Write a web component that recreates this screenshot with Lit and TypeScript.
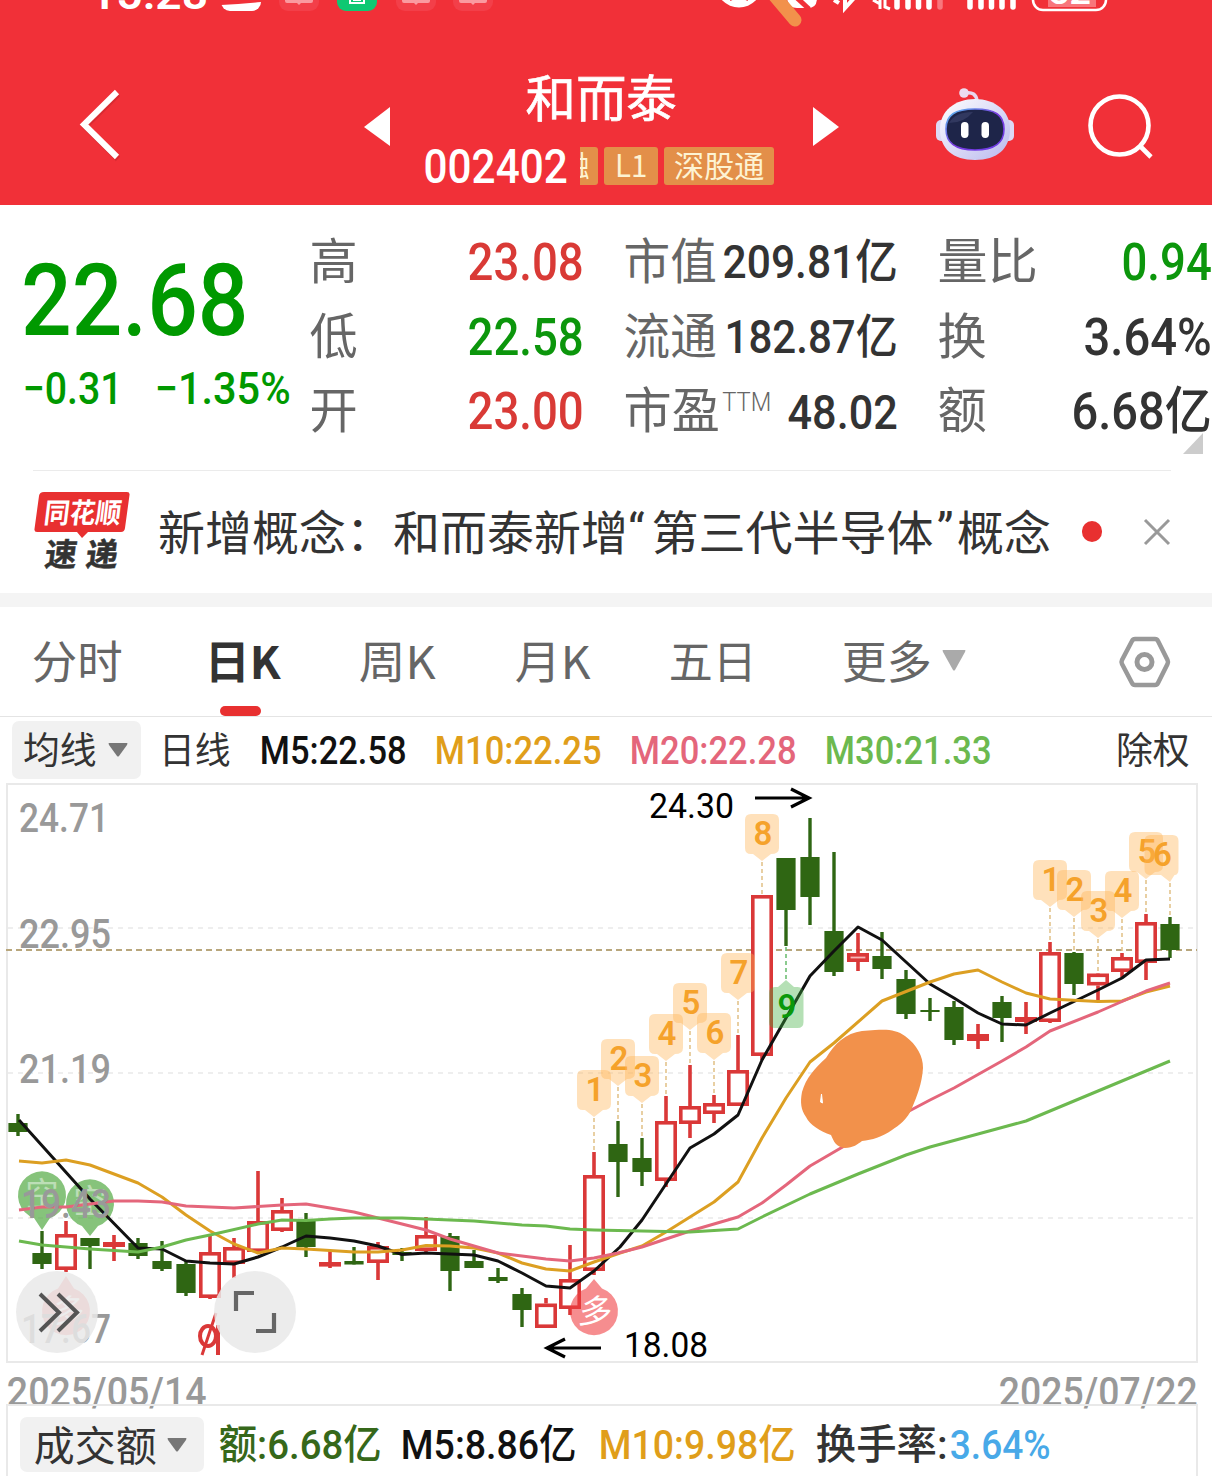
import { LitElement, html, svg, css } from "lit";
import { customElement } from "lit/decorators.js";

const CAP = 0.711;

/** Text fitted to an exact ink width; the box is as tall as a capital, so rows align on the baseline. */
const fit = (text: string, width: number, size: number, cls = "") => {
  const cap = Math.round(size * CAP);
  return html`<svg class="fit ${cls}" width=${width} height=${cap}>
    <text x=${-size * 0.03} y=${cap} font-size=${size} textLength=${width + size * 0.045} lengthAdjust="spacingAndGlyphs">${text}</text>
  </svg>`;
};

type Candle = [high: number, top: number, bottom: number, low: number, up: 0 | 1];

const CANDLES: Candle[] = [
  [1114, 1123, 1132, 1136, 0], [1231, 1253, 1264, 1269, 0], [1221, 1234, 1270, 1272, 1],
  [1238, 1238, 1246, 1269, 0], [1235, 1242, 1247, 1261, 1], [1238, 1243, 1256, 1259, 0],
  [1241, 1261, 1269, 1271, 0], [1260, 1264, 1293, 1296, 0], [1235, 1252, 1298, 1299, 1],
  [1238, 1247, 1264, 1278, 1], [1171, 1221, 1252, 1253, 1], [1198, 1210, 1231, 1232, 1],
  [1213, 1220, 1247, 1257, 0], [1250, 1262, 1266, 1268, 1], [1247, 1261, 1264.5, 1264.5, 0],
  [1242, 1246, 1263, 1280, 1], [1248, 1252, 1255, 1261, 0], [1217, 1235, 1251, 1253, 1],
  [1233, 1236, 1271, 1291, 0], [1250, 1261, 1268, 1268, 0], [1268, 1277, 1281, 1283, 0],
  [1288, 1294, 1310, 1327, 0], [1298, 1303.5, 1328, 1328, 1], [1245, 1279, 1309, 1315, 1],
  [1152, 1175, 1271, 1275, 1], [1121, 1144, 1162, 1197, 0], [1138, 1158, 1172, 1186, 0],
  [1096, 1121, 1181, 1187, 1], [1065, 1106, 1124, 1138, 1], [1095, 1103, 1114, 1123, 1],
  [1035, 1070, 1106, 1106, 1], [895, 895, 1056, 1060, 1], [858, 858, 910, 946, 0],
  [818, 857, 897, 925, 0], [852, 931, 972, 976, 0], [933, 953, 962, 971, 1],
  [932, 956, 969, 979, 0], [970, 979, 1014, 1019, 0], [998, 1010, 1012, 1021, 0],
  [1001, 1007, 1040, 1045, 0], [1024, 1034, 1041, 1049, 1], [996, 1002, 1018, 1042, 0],
  [1002, 1017, 1022, 1034, 1], [942, 952, 1022, 1023, 1], [952, 953, 984, 995, 0],
  [973, 973.5, 985.5, 1000, 1], [953, 957, 972, 977, 1], [914, 922, 963, 980, 1],
  [917, 924, 950, 958, 0],
];

const MA5 = "19,1120 90,1199 138,1248 162,1249 186,1261 210,1263 234,1264 258,1257 282,1247 306,1236 330,1238 354,1241 378,1246 402,1254.5 426,1253 474,1255 498,1261 522,1273 546,1286 570,1288 594,1271 620,1247 642,1220 666,1184 690,1148 714,1134 738,1115 762,1060 786,1018 810,976 834,951 858,927 882,940 906,962 930,984 954,998 978,1013 1002,1024 1026,1025 1050,1013 1098,990 1122,978 1146,960 1170,959";
const MA10 = "19,1161 42,1163 66,1160 90,1165 138,1183 162,1197 186,1215 210,1231 234,1244 258,1253 282,1248 306,1249 354,1252 378,1252 402,1250 426,1245.5 450,1246 474,1248 498,1253 522,1263 546,1269 570,1271 594,1262 620,1253 642,1246 666,1232 714,1202 738,1182 762,1138 786,1098 810,1062 834,1043 882,1001 930,982 954,974 978,970 1002,982 1026,993 1050,999 1098,1001.5 1122,1001 1146,992 1170,986";
const MA20 = "19,1210 42,1207 66,1207 90,1204 114,1201 138,1201 162,1202 186,1206 234,1208 282,1205 306,1204 354,1212 402,1224 426,1230 450,1239 474,1246 498,1253 522,1256 546,1259 570,1261 594,1258 618,1253 642,1247 666,1239 690,1231 738,1217 762,1203 786,1185 810,1166 858,1138 930,1100 954,1088 1002,1061 1026,1047 1050,1031 1098,1012 1146,991 1170,983";
const MA30 = "19,1241 42,1245 66,1247 90,1249 138,1252 162,1247 186,1240 210,1235 258,1224 282,1220 306,1220.5 330,1219 354,1218 402,1218 450,1220 474,1221 522,1225 546,1226 570,1229 594,1230 642,1231 690,1232 738,1229 762,1217 810,1194 858,1174 906,1155 930,1147 978,1134 1026,1121 1098,1091 1146,1071 1170,1061";

/** Count markers: digit, pointer x, top of the tag. */
const TAGS: [string, number, number][] = [
  ["1", 594, 1070], ["2", 618, 1039], ["3", 642, 1056], ["4", 666, 1014], ["5", 690, 983],
  ["6", 714, 1013], ["7", 738, 953], ["8", 762, 814], ["1", 1050, 860], ["2", 1074, 870],
  ["3", 1098, 891], ["4", 1122, 871], ["5", 1146, 832], ["6", 1170, 835],
];

const QUOTES: [string, number, string, number, number, string][][] = [
  [["高", 46, "23.08", 114, 51, "up"], ["低", 46, "22.58", 114, 51, "down"], ["开", 46, "23.00", 114, 51, "up"]],
  [["市值", 91, "209.81亿", 173, 47, "mid"], ["流通", 91, "182.87亿", 171, 47, "mid"], ["市盈", 94, "48.02", 108, 49, ""]],
  [["量比", 98, "0.94", 88, 51, "down"], ["换", 47, "3.64%", 126, 51, ""], ["额", 47, "6.68亿", 138, 51, ""]],
];

@customElement("stock-chart")
export class StockChart extends LitElement {
  static styles = css`
    :host { display: block; }
    svg { display: block; font-family: Roboto, "Noto Sans CJK SC", sans-serif; }
    .axis { fill: #999; font-size: 40px; font-weight: 500; }
    .mark { fill: #000; font-size: 35px; }
    .tag { fill: #f5a22b; font-size: 33px; font-weight: 600; text-anchor: middle; }
    .nine { fill: #0a980a; }
    .pin { fill: #fff; font-size: 33px; text-anchor: middle; font-family: "Noto Sans CJK SC", sans-serif; }
    .ma { fill: none; stroke-width: 3; stroke-linejoin: round; }
  `;

  private candle([h, t, b, l, up]: Candle, i: number) {
    const x = 18 + i * 24;
    return up
      ? svg`<path d="M${x} ${h}V${t}M${x} ${b}V${l}" stroke="#da3838" stroke-width="3.6"/>
        <rect x=${x - 9.2} y=${t + 1.8} width="18.4" height=${Math.max(b - t - 3.6, 1)} fill=${b - t < 10 ? "#f7b5b5" : "#fff"} stroke="#da3838" stroke-width="3.6"/>`
      : svg`<path d="M${x} ${h}V${l}" stroke="#2f6613" stroke-width="3.4"/>
        <rect x=${x - 9.6} y=${t} width="19.2" height=${b - t} fill="#2f6613"/>`;
  }

  private tag([n, x, y]: [string, number, number]) {
    const left = Math.min(x - 17, 1144.5);
    const high = CANDLES[(x - 18) / 24][0];
    const right = left + 34;
    const shoulder = Math.min(x + 9, right - 4);
    return svg`<path d="M${left + 6} ${y}H${right - 6}Q${right} ${y} ${right} ${y + 6}V${y + 34}Q${right} ${y + 40} ${shoulder} ${y + 40}L${x} ${y + 47}L${x - 9} ${y + 40}H${left + 6}Q${left} ${y + 40} ${left} ${y + 34}V${y + 6}Q${left} ${y} ${left + 6} ${y}Z" fill="#ffb454" fill-opacity=".4"/>
      <path d="M${x} ${y + 48}V${high}" stroke="#e3c48c" stroke-width="1.6" stroke-dasharray="4 3"/>
      <text class="tag" x=${left + 18} y=${y + 31}>${n}</text>`;
  }

  render() {
    return html`<svg width="1212" height="594" viewBox="0 782 1212 594">
      <g stroke="#e9e9e9" stroke-width="2" fill="none">
        <path d="M7 784H1197V1362H7Z"/>
        <path d="M8 928H1197M8 1073H1197M8 1218H1197" stroke-width="1.6" stroke-dasharray="5 5"/>
      </g>
      <path d="M6 950H1197" stroke="#b8a67c" stroke-width="2" stroke-dasharray="6 4"/>
      <g fill="#4ca63c" fill-opacity=".68">
        <path d="M42 1230L34 1218A24 24 0 1 1 50 1218Z"/>
        <path d="M90 1236L82 1226A24 24 0 1 1 98 1226Z"/>
      </g>
      <g opacity=".45"><text class="pin" x="42" y="1206">空</text><text class="pin" x="90" y="1213">空</text></g>
      ${CANDLES.map((c, i) => this.candle(c, i))}
      <g fill="#f03a3e" fill-opacity=".58">
        <path d="M594 1279L602 1288.5A24 24 0 1 1 586 1288.5Z"/>
        <path d="M66 1276L74 1288.5A24 24 0 1 1 58 1288.5Z"/>
      </g>
      <g transform="skewX(-10)"><text class="pin" x="827" y="1323">多</text><text class="pin" x="299" y="1323">多</text></g>
      <polyline class="ma" points=${MA5} stroke="#111"/>
      <polyline class="ma" points=${MA10} stroke="#dc9f22"/>
      <polyline class="ma" points=${MA20} stroke="#e4667b"/>
      <polyline class="ma" points=${MA30} stroke="#6cb94f"/>
      ${TAGS.map((t) => this.tag(t))}
      <path d="M786 947V981" stroke="#6fbf73" stroke-width="1.6" stroke-dasharray="4 3"/>
      <path d="M786 980L794 987H797.5q6 0 6 6v29q0 6-6 6H775q-6 0-6-6v-29q0-6 6-6H778Z" fill="#3cae3c" fill-opacity=".38"/>
      <text class="tag nine" x="787" y="1018">9</text>
      <path d="M875 1030C888 1029 897 1030 905 1036C917 1045 923 1056 923 1068C922 1084 917 1096 912 1108C908 1119 898 1126 892 1130C882 1137 872 1140 862 1141C858 1144 853 1148 845 1148C836 1147 834 1142 831 1135C820 1131 810 1125 806 1117C801 1110 800 1102 802 1092C806 1078 814 1069 826 1058C834 1044 846 1033 862 1031Z" fill="#f2914b"/>
      <path d="M821.5 1094L822.5 1103L820.5 1102Z" fill="#fff" stroke="#fff"/>
      <text class="axis" x="19" y="832" textLength="90" lengthAdjust="spacingAndGlyphs">24.71</text>
      <text class="axis" x="19" y="948" textLength="92" lengthAdjust="spacingAndGlyphs">22.95</text>
      <text class="axis" x="19" y="1083" textLength="92" lengthAdjust="spacingAndGlyphs">21.19</text>
      <text class="axis" x="21" y="1218" textLength="90" lengthAdjust="spacingAndGlyphs">19.43</text>
      <text class="axis" x="21" y="1343" textLength="90" lengthAdjust="spacingAndGlyphs">17.67</text>
      <text class="mark" x="649" y="818" textLength="85" lengthAdjust="spacingAndGlyphs">24.30</text>
      <text class="mark" x="624" y="1357" textLength="84" lengthAdjust="spacingAndGlyphs">18.08</text>
      <path d="M755 798H809M791 789L809 798L791 807M601 1348H547M565 1339L547 1348L565 1357" fill="none" stroke="#000" stroke-width="3.2"/>
      <g fill="none" stroke="#da3838" stroke-width="4">
        <ellipse cx="208" cy="1336" rx="8" ry="10"/><path d="M216 1313L202 1355" stroke-width="3"/><path d="M218 1325V1355"/>
      </g>
      <g fill="#e9e9e9" fill-opacity=".85"><circle cx="57" cy="1312" r="41"/><circle cx="255" cy="1312" r="41"/></g>
      <path d="M40 1294L59 1312.5L40 1331M58 1294L77 1312.5L58 1331" fill="none" stroke="#555" stroke-width="4"/>
      <path d="M236 1311V1293H254M274 1313V1331H256" fill="none" stroke="#666" stroke-width="4.2"/>
    </svg>`;
  }
}

@customElement("app-root")
export class AppRoot extends LitElement {
  static styles = css`
    :host { display: block; width: 1212px; height: 1476px; overflow: hidden; background: #fff; color: #333; font-family: Roboto, "Noto Sans CJK SC", sans-serif; }
    svg { display: block; flex: none; }
    .fit { overflow: visible; fill: currentColor; font-weight: 500; }
    .cjk { font-family: "Noto Sans CJK SC", sans-serif; font-weight: 400; }
    .thin { font-weight: 300; margin-left: 4px; }
    .mid { margin-bottom: 2px; }
    .heavy { stroke: currentColor; stroke-width: 0.7; }
    .bold { font-family: "Noto Sans CJK SC", sans-serif; font-weight: 700; }
    .up { color: #d93a36; }
    .down { color: #0c960c; }
    header { height: 205px; background: #f13038; color: #fff; display: flex; flex-direction: column; }
    .bar { display: flex; align-items: flex-start; height: 177px; }
    .back { margin: 60px 0 0 76px; }
    .prev { margin: 79px 0 0 242px; }
    .title { width: 350px; margin-left: 34px; display: flex; flex-direction: column; }
    .name { margin: 53px 0 0 102px; }
    .code { display: flex; align-items: center; height: 38px; margin-top: 30px; }
    .badge { height: 38px; border-radius: 3px; background: #e38f49; color: #fdf3d3; display: flex; align-items: center; justify-content: center; margin-left: 6px; }
    .cut { width: 18px; margin-left: 13px; overflow: hidden; justify-content: flex-end; border-radius: 0 3px 3px 0; }
    .cut svg { margin-right: 9px; }
    .l1 { width: 54px; }
    .sgt { width: 110px; }
    .next { margin: 79px 0 0 38px; }
    .robot { margin: 58px 0 0 96px; }
    .search { margin: 64px 0 0 70px; }
    .quote { height: 265px; display: flex; position: relative; }
    .main { width: 288px; padding-left: 24px; box-sizing: border-box; flex: none; color: #009900; }
    .price { margin-top: 58px; }
    .delta { display: flex; gap: 34px; margin-top: 37px; }
    .cols { display: flex; gap: 42px; margin: 1px 0 0 23px; }
    .col { width: 272px; }
    .cell { height: 74.4px; display: flex; justify-content: space-between; align-items: flex-end; }
    .lab { display: flex; align-items: flex-start; color: #666; margin-bottom: 1px; }
    .corner { position: absolute; left: 1183px; top: 228px; }
    .news { height: 122px; margin: 0 41px 0 33px; border-top: 1px solid #ebebeb; display: flex; align-items: flex-start; }
    .logo { margin: 20px 0 0 1px; }
    .headline { margin: 29px 0 0 28px; font: 47px/60px "Noto Sans CJK SC", sans-serif; white-space: nowrap; width: 901px; display: flex; }
    .q { width: 23.5px; font-family: Roboto, sans-serif; }
    .qr { text-align: center; }
    .dot { width: 20.5px; height: 20.5px; border-radius: 50%; background: #e83030; margin: 50px 0 0 25px; }
    .close { margin: 47px 0 0 41px; }
    .gap { height: 14px; background: #f4f4f4; }
    .tabs { height: 109px; border-bottom: 1px solid #e4e4e4; display: grid; grid-template-columns: 173px 154px 156px 154px 173px 275px 1fr; padding-left: 33px; align-items: start; }
    .tab { padding-top: 40px; display: flex; color: #666; position: relative; height: 69px; align-items: flex-start; }
    .on { color: #333; }
    .on::after { content: ""; position: absolute; left: 14px; bottom: 0; width: 41px; height: 10px; border-radius: 5px; background: #e83030; }
    .tri { margin: 3px 0 0 11px; }
    .hex { margin-top: 29px; }
    .legend { height: 65px; display: grid; grid-template-columns: 148px 101px 175px 195px 195px 291px 1fr; padding-left: 12px; align-items: start; }
    .legend > .fit { margin-top: 19px; }
    .legend > .cjk { margin-top: 21px; }
    .pill { background: #f1f1f1; border-radius: 7px; display: flex; box-sizing: border-box; }
    .p1 { width: 129px; height: 58px; margin-top: 4px; padding: 17px 0 0 12px; gap: 12px; }
    .p1 .arrow { margin-top: 5px; }
    .dates { height: 29px; display: flex; justify-content: space-between; padding: 2px 15px 0 8px; box-sizing: border-box; color: #999; }
    .turnover { position: relative; margin: -1px 14px 0 6px; height: 72px; box-sizing: border-box; border: 2px solid #e9e9e9; border-bottom: 0; display: grid; grid-template-columns: 200px 182px 198px 217px 134px 1fr; padding-left: 12px; align-items: start; }
    .turnover > .fit { margin-top: 24px; }
    .p2 { width: 184px; height: 55px; margin-top: 11px; padding: 15px 0 0 15px; gap: 11px; }
    .p2 .arrow { margin-top: 6px; }
    .ma { color: #111; }
    .y { color: #e09e1a; }
    .p { color: #e4667b; }
    .g { color: #6cb94f; }
    .dg { color: #36681a; }
    .b { color: #48a9e8; }
  `;

  private status() {
    return html`<svg width="1212" height="28">
      <text x="90" y="9" font-size="42" font-weight="600" fill="#fff" textLength="118" lengthAdjust="spacingAndGlyphs">15:28</text>
      <rect x="221" y="-30" width="40" height="41" rx="9" fill="#fff"/><path d="M221 0H261V2Q240 4 221 5Z" fill="#f13038"/>
      ${[279, 396, 453].map((x) => svg`<rect x=${x} y="-30" width="40" height="41" rx="9" fill="#f33f49"/><path d="M${x + 6} 0H${x + 34}V1Q${x + 34} 3 ${x + 32} 3H${x + 22}L${x + 20} 5L${x + 18} 3H${x + 8}Q${x + 6} 3 ${x + 6} 1Z" fill="#fa9aa0"/>`)}
      <rect x="337" y="-30" width="40" height="41" rx="9" fill="#0fc872"/><path d="M350 -2V3H364V-2M353 0H361" fill="none" stroke="#fff" stroke-width="2"/>
      <circle cx="739" cy="-16" r="23.5" fill="#fff"/><path d="M730 0L739 -4L748 0" fill="none" stroke="#f13038" stroke-width="2"/>
      <path d="M787 -2Q788 8 797 8H808Q817 8 817 -2Z" fill="#fff"/><path d="M796 -3L809 9" stroke="#f13038" stroke-width="5"/>
      <path d="M773 -6L795 20" stroke="#f2914b" stroke-width="13" stroke-linecap="round"/>
      <path d="M834 0L839 3M845 -3V8L855 -3" fill="none" stroke="#fff" stroke-width="4"/>
      <path d="M873 0L880 4M880 -2V9M885 -2V7L890 9" fill="none" stroke="#fff" stroke-width="3"/>
      <path d="M897 -4V7M908 -4V7M918.5 -4V7M929 -4V7M970 -4V7M981 -4V7M991.5 -4V7M1002 -4V7M1013 -4V7" stroke="#fff" stroke-width="5.5" stroke-linecap="round"/>
      <path d="M940 -4V7" stroke="#f8767c" stroke-width="5.5" stroke-linecap="round"/>
      <path d="M1048 -4H1096V7H1048Z" fill="#f8767c"/>
      <rect x="1033" y="-26" width="73" height="36" rx="10" fill="none" stroke="#fff" stroke-width="2.5"/>
      <text x="1048" y="4" font-size="32" font-weight="700" fill="#fff" textLength="43" lengthAdjust="spacingAndGlyphs">62</text>
    </svg>`;
  }

  private robot() {
    return html`<svg class="robot" width="78" height="75" viewBox="0 0 78 75">
      <defs>
        <linearGradient id="shell" x1="0" y1="0" x2="1" y2="1"><stop offset="0" stop-color="#fff"/><stop offset="1" stop-color="#b9b8ee"/></linearGradient>
        <linearGradient id="rim" x1="0" y1="0" x2="1" y2="1"><stop offset="0" stop-color="#57c4f0"/><stop offset=".5" stop-color="#7a3be0"/><stop offset="1" stop-color="#6a3be6"/></linearGradient>
      </defs>
      <path d="M29 7Q40 5 41 15" fill="none" stroke="#e8d6ee" stroke-width="3.5"/><circle cx="28" cy="7" r="4.8" fill="#ecdcf0"/>
      <rect x="0" y="34" width="78" height="21" rx="5" fill="#ddd9f5"/>
      <path d="M39 13C59 13 74 25 74 43C74 63 61 74 39 74C17 74 4 63 4 43C4 25 19 13 39 13Z" fill="url(#shell)"/>
      <path d="M39 23C59 23 68 29 68 43C68 57 59 64 39 64C19 64 10 57 10 43C10 29 19 23 39 23Z" fill="#1e2549" stroke="url(#rim)" stroke-width="1.6"/>
      <path d="M13 37Q19 26 37 26Q28 37 13 37Z" fill="#39406a" opacity=".7"/>
      <rect x="25" y="36" width="7.5" height="16" rx="3.7" fill="#fff"/><rect x="45.5" y="36" width="7.5" height="16" rx="3.7" fill="#fff"/>
    </svg>`;
  }

  private down(w: number, h: number, fill: string, cls: string) {
    return html`<svg class=${cls} width=${w} height=${h}><path d="M1 0H${w - 1}Q${w} 0 ${w - 1} 2L${w / 2 + 1} ${h - 1}Q${w / 2} ${h} ${w / 2 - 1} ${h - 1}L1 2Q0 0 1 0Z" fill=${fill}/></svg>`;
  }

  render() {
    return html`
      <header>
        ${this.status()}
        <div class="bar">
          <svg class="back" width="46" height="74"><path d="M41 4L8 36.5L41 69" transform="translate(1 2)" fill="none" stroke="#b82229" stroke-opacity=".4" stroke-width="6"/><path d="M41 4L8 36.5L41 69" fill="none" stroke="#fff" stroke-width="6"/></svg>
          <svg class="prev" width="27" height="40"><path d="M26 0V39L0 20Z" fill="#fff"/></svg>
          <div class="title">
            <div class="name">${fit("和而泰", 149, 50, "cjk heavy")}</div>
            <div class="code">
              ${fit("002402", 142, 48)}
              <div class="badge cut">${fit("融", 28, 29, "cjk")}</div>
              <div class="badge l1">${fit("L1", 31, 31, "cjk")}</div>
              <div class="badge sgt">${fit("深股通", 89, 30, "cjk")}</div>
            </div>
          </div>
          <svg class="next" width="27" height="40"><path d="M0 0V39L26 20Z" fill="#fff"/></svg>
          ${this.robot()}
          <svg class="search" width="72" height="70"><circle cx="35.5" cy="33.5" r="29" fill="none" stroke="#fff" stroke-width="4.6"/><path d="M56 54L67 65" stroke="#fff" stroke-width="4.6"/></svg>
        </div>
      </header>

      <section class="quote">
        <div class="main">
          <div class="price">${fit("22.68", 223, 101)}</div>
          <div class="delta">${fit("−0.31", 98, 45)}${fit("−1.35%", 134, 45)}</div>
        </div>
        <div class="cols">
          ${QUOTES.map((col) => html`<div class="col">${col.map(([l, lw, v, vw, vs, tone]) => html`
            <div class="cell"><div class="lab">${fit(l, lw, 49, "cjk")}${l === "市盈" ? fit("TTM", 48, 26, "thin") : ""}</div>${fit(v, vw, vs, tone)}</div>`)}</div>`)}
        </div>
        <svg class="corner" width="20" height="21"><path d="M20 0V21H0Z" fill="#ccc"/></svg>
      </section>

      <section class="news">
        <svg class="logo" width="96" height="82">
          <path d="M10 1H93Q96 1 95.5 4L91 37Q90.5 41 87 41H54L48 47L43 41H3Q0 41 .5 38L5 5Q5.5 1 10 1Z" fill="#e83030"/>
          <g class="bold" transform="skewX(-7)">
            <text x="13" y="32" font-size="28" textLength="77" lengthAdjust="spacingAndGlyphs" fill="#fff">同花顺</text>
            <text x="19" y="75" font-size="32" textLength="73" fill="#333" stroke="#333" stroke-width=".5">速递</text>
          </g>
        </svg>
        <div class="headline">新增概念：和而泰新增<span class="q">“</span>第三代半导体<span class="q qr">”</span>概念</div>
        <div class="dot"></div>
        <svg class="close" width="28" height="28"><path d="M2 2L26 26M26 2L2 26" stroke="#999" stroke-width="3"/></svg>
      </section>
      <div class="gap"></div>

      <nav class="tabs">
        <div class="tab">${fit("分时", 89, 45, "cjk")}</div>
        <div class="tab on">${fit("日K", 74, 45, "bold")}</div>
        <div class="tab">${fit("周K", 75, 45, "cjk")}</div>
        <div class="tab">${fit("月K", 74, 45, "cjk")}</div>
        <div class="tab">${fit("五日", 86, 45, "cjk")}</div>
        <div class="tab">${fit("更多", 88, 45, "cjk")}${this.down(24, 21, "#aaa", "tri")}</div>
        <svg class="hex" width="54" height="52"><path d="M17 3H37Q39 3 40 5L49.5 24Q50.5 26 49.5 28L40 47Q39 49 37 49H17Q15 49 14 47L4 28Q3 26 4 24L14 5Q15 3 17 3Z" fill="none" stroke="#999" stroke-width="4.5"/><circle cx="26.5" cy="26" r="7.5" fill="none" stroke="#999" stroke-width="5"/></svg>
      </nav>

      <section class="legend">
        <div class="pill p1">${fit("均线", 72, 37, "cjk")}${this.down(20, 14, "#777", "arrow")}</div>
        ${fit("日线", 70, 37, "cjk")}
        ${fit("M5:22.58", 145, 39, "ma")}
        ${fit("M10:22.25", 165, 39, "y")}
        ${fit("M20:22.28", 165, 39, "p")}
        ${fit("M30:21.33", 165, 39, "g")}
        ${fit("除权", 72, 37, "cjk")}
      </section>

      <stock-chart></stock-chart>

      <div class="dates">${fit("2025/05/14", 198, 40)}${fit("2025/07/22", 197, 40)}</div>
      <section class="turnover">
        <div class="pill p2">${fit("成交额", 121, 41, "cjk")}${this.down(20, 14, "#777", "arrow")}</div>
        ${fit("额:6.68亿", 161, 41, "dg")}
        ${fit("M5:8.86亿", 174, 41, "ma")}
        ${fit("M10:9.98亿", 195, 41, "y")}
        ${fit("换手率:", 130, 41)}
        ${fit("3.64%", 99, 41, "b")}
      </section>`;
  }
}
